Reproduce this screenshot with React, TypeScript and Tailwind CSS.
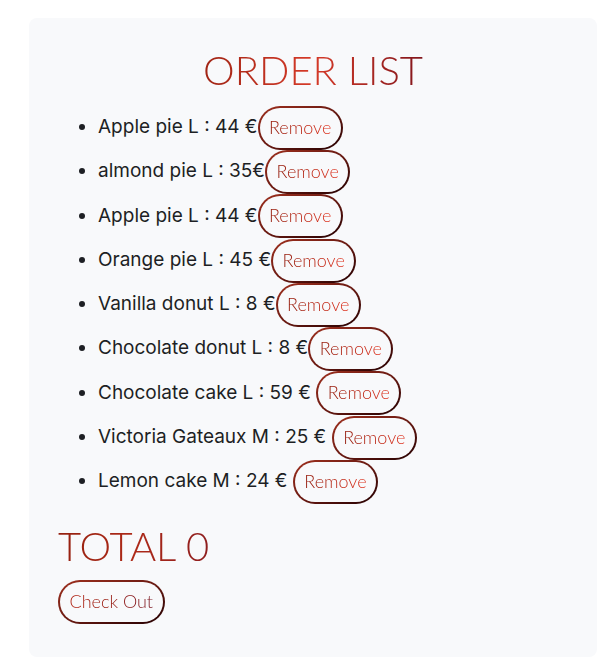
const orders = [
  { label: 'Apple pie L : 44 €' },
  { label: 'almond pie L : 35€' },
  { label: 'Apple pie L : 44 €' },
  { label: 'Orange pie L : 45 €' },
  { label: 'Vanilla donut L : 8 €' },
  { label: 'Chocolate donut L : 8 €' },
  { label: 'Chocolate cake L : 59 € ' },
  { label: 'Victoria Gateaux M : 25 € ' },
  { label: 'Lemon cake M : 24 € ' },
];

function PillButton({ children, textClass }: { children: string; textClass: string }) {
  return (
    <span className="inline-block align-middle rounded-full bg-gradient-to-br from-[#a0301e] via-[#6a1a12] to-[#250303] p-[2px]">
      <span className="block rounded-full bg-[#f8f9fb] px-[9.5px] pt-[5px] pb-[7px]">
        <span
          className={`block bg-clip-text text-transparent text-[18px] leading-[28px] font-light font-['Lato',sans-serif] ${textClass}`}
        >
          {children}
        </span>
      </span>
    </span>
  );
}

export default function App() {
  return (
    <div className="min-h-[670px] bg-white pt-[18px]">
      <div className="ml-[29px] w-[568px] h-[639px] rounded-lg bg-[#f8f9fb] px-[29px] pt-[28px]">
        <h1 className="text-center font-['Lato',sans-serif] font-light text-[40px] leading-[48px]">
          <span className="bg-gradient-to-r from-[#a02414] via-[#d63a28] to-[#82161c] bg-clip-text text-transparent">
            ORDER LIST
          </span>
        </h1>

        <ul className="mt-[11px] list-disc pl-10 font-['Inter',sans-serif] text-[19px] text-[#1d1f24]">
          {orders.map((order, i) => (
            <li key={i} className="h-[44.25px] leading-[44px]">
              {order.label}
              <PillButton textClass="bg-gradient-to-r from-[#921808] to-[#e0301c]">Remove</PillButton>
            </li>
          ))}
        </ul>

        <h2 className="mt-[19px] font-['Lato',sans-serif] font-light text-[40px] leading-[48px]">
          <span className="bg-gradient-to-r from-[#94200f] via-[#ae2a18] to-[#8e1e1e] bg-clip-text text-transparent">
            TOTAL 0
          </span>
        </h2>

        <div className="mt-[10px]">
          <PillButton textClass="bg-gradient-to-r from-[#b02010] via-[#961a10] to-[#7c1822]">Check Out</PillButton>
        </div>
      </div>
    </div>
  );
}
